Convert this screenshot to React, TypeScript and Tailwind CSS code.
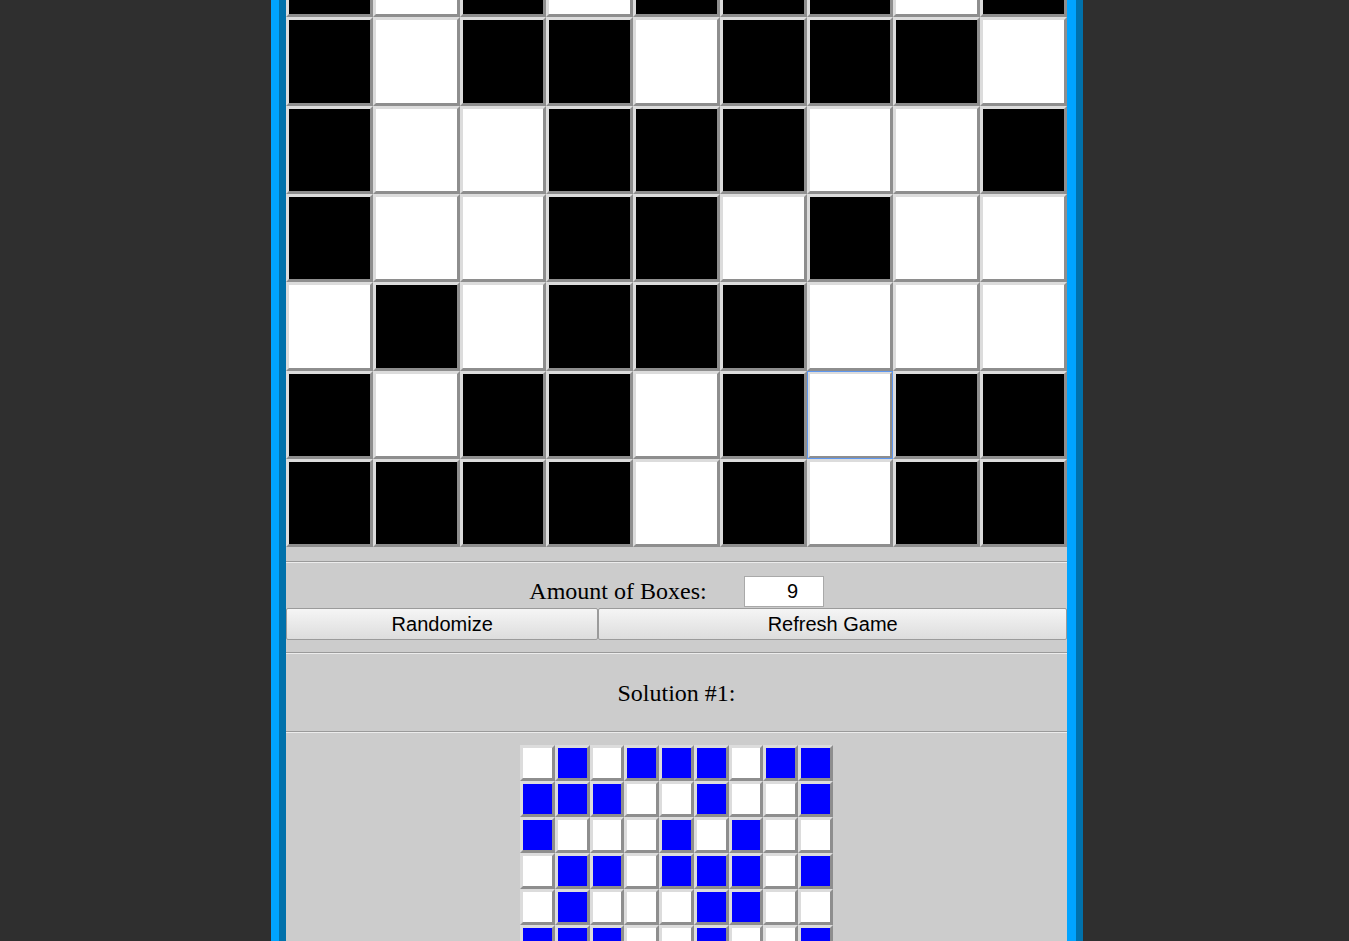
import { useState } from "react";

// 1 = black, 0 = white
const BOARD = [
  [0, 1, 1, 0, 1, 0, 0, 1, 0],
  [1, 0, 0, 1, 0, 1, 1, 0, 1],
  [1, 0, 1, 0, 1, 1, 1, 0, 1],
  [1, 0, 1, 1, 0, 1, 1, 1, 0],
  [1, 0, 0, 1, 1, 1, 0, 0, 1],
  [1, 0, 0, 1, 1, 0, 1, 0, 0],
  [0, 1, 0, 1, 1, 1, 0, 0, 0],
  [1, 0, 1, 1, 0, 1, 0, 1, 1],
  [1, 1, 1, 1, 0, 1, 0, 1, 1],
];

// 1 = blue
const SOLUTION = [
  [0, 1, 0, 1, 1, 1, 0, 1, 1],
  [1, 1, 1, 0, 0, 1, 0, 0, 1],
  [1, 0, 0, 0, 1, 0, 1, 0, 0],
  [0, 1, 1, 0, 1, 1, 1, 0, 1],
  [0, 1, 0, 0, 0, 1, 1, 0, 0],
  [1, 1, 1, 0, 0, 1, 0, 0, 1],
  [0, 0, 1, 0, 1, 0, 0, 1, 0],
  [1, 0, 0, 1, 0, 0, 1, 0, 0],
  [0, 1, 0, 0, 1, 0, 0, 1, 1],
];

const bevel =
  "border-[3px] border-t-[#dcdcdc] border-l-[#dcdcdc] border-b-[#8e8e8e] border-r-[#8e8e8e]";

function Rule() {
  return <div className="h-[2px] border-t border-t-[#9a9a9a] border-b border-b-[#ececec]" />;
}

export default function App() {
  const [board, setBoard] = useState(BOARD);
  const [focused, setFocused] = useState<[number, number] | null>([7, 6]);

  const toggle = (r: number, c: number) => {
    setFocused([r, c]);
    setBoard((b) => b.map((row, ri) => row.map((v, ci) => (ri === r && ci === c ? 1 - v : v))));
  };

  return (
    <div className="h-[941px] overflow-hidden bg-[#2f2f2f]">
      <div className="ml-[271px] w-[812px] min-h-[941px] border-l-[8px] border-l-[#00a4ff] border-r-[7px] border-r-[#0071ab]">
        <div className="min-h-[941px] border-l-[7px] border-l-[#0071ab] border-r-[9px] border-r-[#00a4ff] bg-[#cccccc]">
          <div className="-mt-[247.7px] grid grid-cols-9">
            {board.map((row, r) =>
              row.map((v, c) => {
                const isFocused = focused && focused[0] === r && focused[1] === c;
                return (
                  <div
                    key={`${r}-${c}`}
                    onClick={() => toggle(r, c)}
                    className={`h-[88.33px] ${bevel} ${v ? "bg-black" : "bg-white"} ${
                      isFocused ? "outline outline-[#5e97ef] -outline-offset-1" : ""
                    }`}
                  />
                );
              })
            )}
          </div>

          <div className="mt-[14px]">
            <Rule />
          </div>

          <div className="mt-[13px] mb-[1px] h-[31px] flex items-center justify-center gap-[37px]">
            <span className="font-['Liberation_Serif',serif] text-[24px] leading-[31px] text-black">
              Amount of Boxes:
            </span>
            <input
              type="text"
              defaultValue="9"
              className="w-[80px] h-[31px] bg-white border border-[#a9a9a9] pl-[18px] text-center text-[20px] leading-normal font-['Liberation_Sans',Arial,sans-serif] text-black outline-none"
            />
          </div>

          <div className="flex font-['Liberation_Sans',Arial,sans-serif] text-[20px] leading-normal text-black">
            <button className="w-[40%] h-[32px] border border-[#9b9b9b] rounded-[2px] bg-gradient-to-b from-[#f5f5f5] to-[#dddddd]">
              Randomize
            </button>
            <button className="w-[60%] h-[32px] border border-[#9b9b9b] rounded-[2px] bg-gradient-to-b from-[#f5f5f5] to-[#dddddd]">
              Refresh Game
            </button>
          </div>

          <div className="mt-[12px]">
            <Rule />
          </div>

          <div className="h-[77px] flex items-center justify-center font-['Liberation_Serif',serif] text-[24px] leading-normal text-black">
            Solution #1:
          </div>

          <Rule />

          <div className="mt-[12px] mx-auto w-[313px] grid grid-cols-9">
            {SOLUTION.map((row, r) =>
              row.map((v, c) => (
                <div key={`s${r}-${c}`} className={`h-[36px] ${bevel} ${v ? "bg-[#0000ff]" : "bg-white"}`} />
              ))
            )}
          </div>
        </div>
      </div>
    </div>
  );
}
